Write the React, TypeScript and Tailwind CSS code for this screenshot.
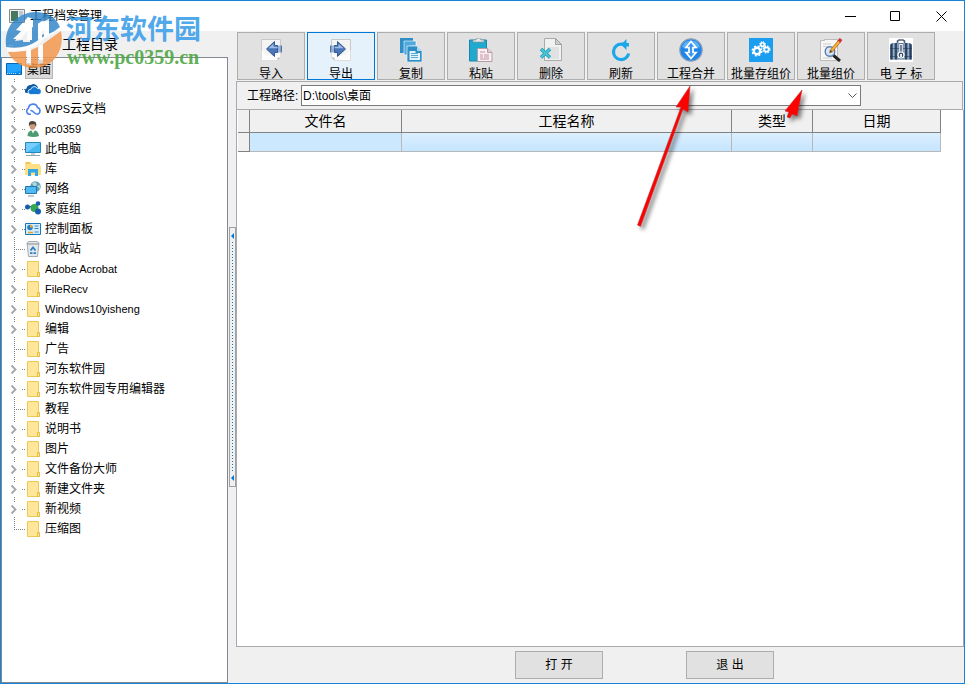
import { useState } from "react"
import type { ReactNode } from "react"

function PageIcon({ flip }: { flip?: boolean }) {
  return (
    <svg width="24" height="24" viewBox="0 0 24 24">
      <g transform={flip ? "translate(24 0) scale(-1 1)" : undefined}>
        <path d="M2.500 1.500h19v18l-3 3h-16z" fill="#f4f4f2" stroke="#c9c9c7" />
        <path d="M2.500 12l5 5 9 1 5-5v6.500l-3 3h-16z" fill="#fff" opacity=".8" />
        <path d="M18.500 22.500v-3h3z" fill="#bcbcba" />
      </g>
      <g transform={flip ? "translate(23 0) scale(-1 1)" : "translate(1 0)"}>
        <path d="M6.500 11l8-7.500v4h3v7h-3v4z" fill="#4a76b8" stroke="#34588f" />
        <path d="M8.500 10.200l5-4.500v3h4v1.500z" fill="#9dbde6" />
        <path d="M18.500 7.500h1v7h-1zM20.500 7.500h1.500v7h-1.500z" fill="#4a76b8" />
      </g>
    </svg>
  )
}

function CopyIcon() {
  return (
    <svg width="24" height="24" viewBox="0 0 24 24">
      <path d="M1 0h13v4H6v11H1z" fill="#2f8ec6" />
      <path d="M5 3h12v5H11v9H5z" fill="#4fa9dc" stroke="#fff" strokeWidth=".6" />
      <path d="M8 8h10l5 5v11H8z" fill="#2f8ec6" stroke="#e5f3fb" strokeWidth=".7" />
      <path d="M18 8v5h5z" fill="#a7d7f2" />
      <path d="M10.500 13h6v2h4.500v7H10.500z" fill="#e4f2fb" />
      <path d="M12 15.500h7M12 17.500h7M12 19.500h7" stroke="#58a9d8" />
    </svg>
  )
}

function PasteIcon() {
  return (
    <svg width="26" height="24" viewBox="0 0 26 24">
      <path d="M1.500 2h17v21h-17z" fill="#20a9cf" stroke="#1487b0" />
      <path d="M5 4V2h3l1-2h3l1 2h3v2z" fill="#e5e8ea" stroke="#879299" strokeWidth=".7" />
      <path d="M9.500 10.500h10l4.500 4v9H9.500z" fill="#f8f0f3" stroke="#b99ba6" />
      <path d="M19.500 10.500v4H24" fill="#e4c6cf" stroke="#b99ba6" />
      <path d="M12 14h5M12 17h3M16 17h5M12 19h3M16 19h5M12 21h9" stroke="#c6929f" />
    </svg>
  )
}

function DeleteIcon() {
  return (
    <svg width="24" height="24" viewBox="0 0 24 24">
      <path d="M5.500.500h11l6 6v16h-17z" fill="#f0f1f1" stroke="#aaa" />
      <path d="M16.500.500v6h6z" fill="#cfcfcf" stroke="#888" strokeWidth=".7" />
      <path d="M8 9h12v12H8z" fill="#dfe1e2" />
      <path d="M2 11l9 8.500M11 11l-9 8.500" stroke="#1c9bb2" strokeWidth="3.400" />
      <path d="M2 11l9 8.500M11 11l-9 8.500" stroke="#4bc5d6" strokeWidth="1.800" />
    </svg>
  )
}

function RefreshIcon() {
  return (
    <svg width="24" height="24" viewBox="0 0 24 24">
      <path d="M14 6.200H12.500a7.700 7.700 0 1 0 7.200 9.300" fill="none" stroke="#1ba7ea" strokeWidth="3.200" />
      <path d="M12 6.500L17.500 1v4h2.500v3.500h-2.500V12z" fill="#1ba7ea" />
    </svg>
  )
}

function MergeIcon() {
  return (
    <svg width="24" height="24" viewBox="0 0 24 24">
      <circle cx="12" cy="12" r="11.200" fill="#1f86e8" stroke="#8fa3b8" strokeWidth="1.200" />
      <path d="M3 9a9.500 9.500 0 0 1 18 0q-9 4-18 0z" fill="#5cb0f7" />
      <path d="M12 3.500l5 6h-3v5h3l-5 6-5-6h3v-5H7z" fill="#3d97ee" stroke="#fff" strokeWidth="1.700" />
    </svg>
  )
}

function GearsIcon() {
  return (
    <svg width="24" height="24" viewBox="0 0 24 24">
      <path d="M0 0h24v24H0z" fill="#1b9df0" />
      <g fill="none" stroke="#fff">
        <circle cx="8" cy="13" r="3.200" strokeWidth="2.400" />
        <circle cx="8" cy="13" r="4.800" strokeWidth="1.400" strokeDasharray="2 1.800" />
        <circle cx="13.500" cy="6.500" r="1.800" strokeWidth="1.600" />
        <circle cx="13.500" cy="6.500" r="2.900" strokeWidth="1" strokeDasharray="1.300 1" />
        <circle cx="17.500" cy="11.500" r="2.200" strokeWidth="1.700" />
        <circle cx="17.500" cy="11.500" r="3.400" strokeWidth="1.100" strokeDasharray="1.600 1.100" />
      </g>
    </svg>
  )
}

function InspectIcon() {
  return (
    <svg width="24" height="24" viewBox="0 0 24 24">
      <path d="M1.500 2.500h4v-1h13v21h-17z" fill="#f7f7f7" stroke="#bbb" />
      <path d="M4 6h8M4 8.500h6M4 20h9" stroke="#ccc" />
      <circle cx="11" cy="13.500" r="4.800" fill="#d5e7fa" stroke="#5b7cab" strokeWidth="1.400" />
      <path d="M14.500 17.500l6.500 5.500" stroke="#222" strokeWidth="3" />
      <path d="M20.500 3l-9 11" stroke="#b36a1d" strokeWidth="3.400" />
      <path d="M20.500 3l-9 11" stroke="#f5b13c" strokeWidth="2" />
      <path d="M22 1l-2 2.600" stroke="#d23030" strokeWidth="3.400" />
      <path d="M11.800 12l-1.800 3.500 3-2z" fill="#333" />
    </svg>
  )
}

function CaseIcon() {
  return (
    <svg width="24" height="24" viewBox="0 0 24 24">
      <path d="M0 0h24v24H0z" fill="#fff" />
      <path d="M8.500 5.500V3l1.500-1h4l1.500 1v2.500" fill="none" stroke="#51647c" strokeWidth="1.600" />
      <path d="M1 7l2-2h18l2 2v14.500H1z" fill="#5a7595" />
      <path d="M2.500 6v15.500M7 5v16.500M17 5v16.500M21.500 6v15.500" stroke="#263f60" strokeWidth="1.600" />
      <path d="M4.700 5v16.500M9 5v16.500M15 5v16.500M19.300 5v16.500" stroke="#9fb4ca" strokeWidth="1.200" />
      <path d="M1 10.500h22M1 18.500h22" stroke="#20354f" opacity=".5" />
      <path d="M12 6v8" stroke="#eef3f8" strokeWidth="3.600" />
      <path d="M12 7v8" stroke="#41566f" strokeWidth="1.400" />
      <circle cx="12" cy="17" r="3" fill="#3c5068" stroke="#fff" strokeWidth="1.200" />
      <path d="M11 16h2v3h-2z" fill="#dce6ef" />
    </svg>
  )
}

const tools: { label: string; icon: ReactNode }[] = [
  { label: "导入", icon: <PageIcon /> },
  { label: "导出", icon: <PageIcon flip /> },
  { label: "复制", icon: <CopyIcon /> },
  { label: "粘贴", icon: <PasteIcon /> },
  { label: "删除", icon: <DeleteIcon /> },
  { label: "刷新", icon: <RefreshIcon /> },
  { label: "工程合并", icon: <MergeIcon /> },
  { label: "批量存组价", icon: <GearsIcon /> },
  { label: "批量组价", icon: <InspectIcon /> },
  { label: "电 子 标", icon: <CaseIcon /> },
]

function FolderIcon() {
  return (
    <svg width="16" height="16" viewBox="0 0 16 16">
      <path d="M2.500.500h11v15h-11z" fill="#ffe699" stroke="#edc956" />
      <path d="M12.500 11.500h2v4h-2z" fill="#ffe699" stroke="#e3bb3f" />
    </svg>
  )
}

function MonitorIcon() {
  return (
    <svg width="18" height="16" viewBox="0 0 18 16">
      <path d="M1.500 2.500h15v11h-15z" fill="#0a8df0" stroke="#0567b4" />
      <path d="M2 3h14v7L2 12.500z" fill="#22a3ff" />
      <path d="M2 12.500h10M14 12.500h2" stroke="#b9e0fb" strokeDasharray="1 1" />
    </svg>
  )
}

const icons: Record<string, ReactNode> = {
  onedrive: (
    <svg width="16" height="16" viewBox="0 0 16 16">
      <path d="M1 12a2.500 2.500 0 0 1 .5-4.500A4 4 0 0 1 6 4a4.500 4.500 0 0 1 7 2.500l-5 5.500z" fill="#0c59a4" />
      <path d="M5.500 13.500a2.600 2.600 0 0 1 .3-5.200 3.600 3.600 0 0 1 6.700-.8 3 3 0 0 1 1.500 6z" fill="#1478d4" stroke="#fff" strokeWidth=".8" />
    </svg>
  ),
  wps: (
    <svg width="16" height="16" viewBox="0 0 16 16">
      <path d="M6 13.200H4a3.200 3.200 0 0 1-.5-6A4.600 4.600 0 0 1 12.500 6.500a3.500 3.500 0 0 1 0 6.700q-2 0-4-2.200T5.500 10" fill="none" stroke="#4b83ea" strokeWidth="1.600" />
    </svg>
  ),
  user: (
    <svg width="16" height="16" viewBox="0 0 16 16">
      <path d="M2.500 15q0-5 5-6 6 0 6.500 6-5 2-11.500 0z" fill="#4c9b72" />
      <path d="M6 8.500l2 4 2-3.500z" fill="#f4f4f4" />
      <ellipse cx="7.500" cy="4.800" rx="3" ry="4" fill="#c99a75" />
      <path d="M4 5Q3 0 7.500 0q5 0 3.500 6l-1.500-3-4 .5z" fill="#4d443d" />
    </svg>
  ),
  pc: (
    <svg width="16" height="16" viewBox="0 0 16 16">
      <path d="M.500 1.500h15v10H.500z" fill="#48b8f1" stroke="#2584b8" />
      <path d="M1 2h14L2 11H1z" fill="#75ceff" />
      <path d="M6 12h4v2H6z" fill="#c3d1da" />
      <path d="M1 14.500h14" stroke="#8ea3b1" />
    </svg>
  ),
  library: (
    <svg width="16" height="16" viewBox="0 0 16 16">
      <path d="M0 1h6l1 2h8v2h1v9H0z" fill="#ffdf83" />
      <path d="M1 2h4" stroke="#e2ae37" />
      <path d="M3 15V8h10v7h-3v-3.500H6V15z" fill="#32a9e5" />
    </svg>
  ),
  network: (
    <svg width="16" height="16" viewBox="0 0 16 16">
      <circle cx="10.500" cy="5.500" r="5.200" fill="#5b9fbe" />
      <path d="M7 2l4-1 1 3-3 2zM12 5l3-1v4z" fill="#b5d7d8" />
      <path d="M.500 5.500h11v7H.500z" fill="#4dbaf4" stroke="#2378ab" />
      <path d="M3 15h6" stroke="#7799ad" />
    </svg>
  ),
  home: (
    <svg width="16" height="16" viewBox="0 0 16 16">
      <path d="M3 6l7 1 3-4M10 7l3 4" stroke="#9fb8c8" />
      <circle cx="2.500" cy="6" r="2.500" fill="#175fae" />
      <circle cx="9.500" cy="7" r="4" fill="#32a852" />
      <circle cx="13" cy="2.500" r="2.300" fill="#175fae" />
      <circle cx="13" cy="10.500" r="3" fill="#175fae" />
    </svg>
  ),
  control: (
    <svg width="16" height="16" viewBox="0 0 16 16">
      <path d="M.500 2.500h15v11H.500z" fill="#d3edfc" stroke="#1877b6" />
      <circle cx="5" cy="6.500" r="2.800" fill="#2680c8" />
      <path d="M5 6.500V3.700a2.800 2.800 0 0 1 2.800 2.800z" fill="#f0a825" />
      <path d="M9.500 5h4M9.500 7.500h4M9.500 11h4" stroke="#3a8bc4" />
      <path d="M3 11.500h5" stroke="#e3a42d" strokeWidth="1.500" />
    </svg>
  ),
  recycle: (
    <svg width="16" height="16" viewBox="0 0 16 16">
      <path d="M2 2l2-1.500h8L14 2l-1.500 13.500h-9z" fill="#e5e8ea" stroke="#a5abb0" />
      <path d="M2 3h12" stroke="#888f94" />
      <path d="M5.500 9.500l2.500-3 2.500 3M5 12.200h2.500M8.500 12.200H11" fill="none" stroke="#2482c5" strokeWidth="1.800" />
    </svg>
  ),
  folder: <FolderIcon />,
}

// latin is set a size smaller than the Chinese part of a name
const nodes = [
  { latin: "OneDrive", icon: "onedrive" },
  { latin: "WPS", label: "云文档", icon: "wps" },
  { latin: "pc0359", icon: "user" },
  { label: "此电脑", icon: "pc" },
  { label: "库", icon: "library" },
  { label: "网络", icon: "network" },
  { label: "家庭组", icon: "home" },
  { label: "控制面板", icon: "control" },
  { label: "回收站", icon: "recycle", leaf: true },
  { latin: "Adobe Acrobat", icon: "folder" },
  { latin: "FileRecv", icon: "folder" },
  { latin: "Windows10yisheng", icon: "folder" },
  { label: "编辑", icon: "folder" },
  { label: "广告", icon: "folder", leaf: true },
  { label: "河东软件园", icon: "folder" },
  { label: "河东软件园专用编辑器", icon: "folder" },
  { label: "教程", icon: "folder", leaf: true },
  { label: "说明书", icon: "folder" },
  { label: "图片", icon: "folder" },
  { label: "文件备份大师", icon: "folder" },
  { label: "新建文件夹", icon: "folder" },
  { label: "新视频", icon: "folder" },
  { label: "压缩图", icon: "folder", leaf: true },
]

function Guide({ leaf, last }: { leaf?: boolean; last?: boolean }) {
  return (
    <svg width="23" height="20" viewBox="0 0 23 20" className="shrink-0" fill="none">
      {leaf ? (
        <path d={last ? "M12.500 0v10M12 10.500h11" : "M12.500 0v20M12 10.500h11"} stroke="#808080" strokeDasharray="1 1" />
      ) : (
        <>
          <path d="M12.500 0v3M12.500 18v2M20 10.500h3" stroke="#808080" strokeDasharray="1 1" />
          <path d="M9.500 6.500l4 4-4 4" stroke="#a6a6a6" strokeWidth="1.800" />
        </>
      )}
    </svg>
  )
}

function TitleBar() {
  return (
    <header className="flex h-[30px] items-center bg-white pl-2">
      <svg width="16" height="14" viewBox="0 0 16 14">
        <path d="M.500.500h15v13H.500z" fill="#eee" stroke="#8a8a8a" />
        <path d="M2 2h7v10H2z" fill="#46785f" />
        <path d="M10 2h4v5h-4z" fill="#b9c7d8" />
      </svg>
      <h1 className="ml-[5px] flex-1 text-xs">工程档案管理</h1>
      <button aria-label="最小化" className="flex h-full w-[46px] items-center justify-center">
        <svg width="11" height="11" stroke="#000"><path d="M0 5.500h11" /></svg>
      </button>
      <button aria-label="最大化" className="flex h-full w-[45px] items-center justify-center">
        <svg width="11" height="11" stroke="#000" fill="none"><path d="M.500.500h9v9h-9z" /></svg>
      </button>
      <button aria-label="关闭" className="flex h-full w-[46px] items-center justify-center">
        <svg width="11" height="11" stroke="#000"><path d="M.500.500l10 10M10.500.500l-10 10" /></svg>
      </button>
    </header>
  )
}

function Watermark() {
  return (
    <div className="pointer-events-none absolute top-[9px] left-1 flex gap-1">
      <svg width="57" height="60" viewBox="0 0 57 60" opacity=".82">
        <path d="M1 36C-1 17 11 3 30 2c12 0 21 5 25 15L44 25V13l-7-2-9 6V9l-5-2-12 13 5 1-6 10 8-1v4Q9 36 1 36z" fill="#2f84c8" />
        <path d="M1 36q9 0 16-4h8V19l8-6v13l10-3v4Q22 42 2 40z" fill="#2f84c8" />
        <path d="M56 21c4 20-8 37-27 37C17 58 7 51 3 42l18-1v13l5 1V40l7-3v17l5-1V34z" fill="#f3954a" />
        <path d="M8 29L27 11v19h-5V21l-6 8zM33 30V14l11-5v18l-5 2V18l-2 1v10z" fill="#fff" />
        <path d="M1 37q18 3 31-6 12-9 23-11-11 5-20 13Q20 44 2 41z" fill="#fff" />
        <path d="M22 39h4v14h-4zM34 35h4v15h-4z" fill="#fff" />
      </svg>
      <div className="pt-[3px]">
        <div className="font-['Noto_Sans_CJK_SC',sans-serif] text-[27px] leading-[30px] font-bold text-[#3a9de8]/90">河东软件园</div>
        <div className="pl-px font-['Liberation_Serif',serif] text-[20px] leading-[28px] font-bold text-[#4aa540]/90">www.pc0359.cn</div>
      </div>
    </div>
  )
}

function Arrows() {
  return (
    <svg className="pointer-events-none absolute top-[79px] left-[629px] drop-shadow-[3px_3px_2px_rgba(0,0,0,0.5)]" width="180" height="155" viewBox="630 80 180 155">
      <path d="M690 86l-14 21 5 0-43.500 118 3 1.500L683 109l5 3z" fill="#f00" stroke="#b33" strokeWidth=".6" />
      <path d="M802 90l-17 21 4 1-2 5 3 1 2-4 5 2z" fill="#f00" stroke="#b33" strokeWidth=".6" />
    </svg>
  )
}

export default function App() {
  const [active, setActive] = useState("导出")

  return (
    <div className="relative flex min-h-screen flex-col border border-[#1883d7] bg-[#f0f0f0] font-['Liberation_Sans','Noto_Sans_CJK_SC',sans-serif] text-xs text-black">
      <TitleBar />

      <div className="flex flex-1">
        {/* Project tree */}
        <aside className="flex w-[227px] shrink-0 flex-col">
          <h2 className="h-[26px] pl-[61px] text-sm leading-[26px]">工程目录</h2>
          <div className="flex-1 border border-[#828790] bg-white">
            <div className="flex h-[21px] items-center gap-0.5 pt-px pl-[3px]">
              <MonitorIcon />
              <span className="h-5 border border-[#b5b5b5] bg-[#d9d9d9] px-px leading-[20px]">桌面</span>
            </div>
            <ul>
              {nodes.map((node, i) => (
                <li key={i} className="flex h-5 items-center">
                  <Guide leaf={node.leaf} last={i === nodes.length - 1} />
                  {icons[node.icon]}
                  <span className="ml-1 leading-5 whitespace-nowrap">
                    {node.latin && <span className="text-[11px]">{node.latin}</span>}
                    {node.label}
                  </span>
                </li>
              ))}
            </ul>
          </div>
        </aside>

        {/* Splitter */}
        <div className="flex w-2 shrink-0 flex-col pt-[196px] pl-px">
          <div className="flex h-[260px] flex-col items-center justify-between border border-[#a0a0a0] py-[5px]">
            <svg width="3" height="6"><path d="M3 0v6L0 3z" fill="#0078d7" /></svg>
            <svg width="1" height="230"><path d="M.500 0v230" stroke="#0078d7" strokeDasharray="1 2" /></svg>
            <svg width="3" height="6"><path d="M3 0v6L0 3z" fill="#0078d7" /></svg>
          </div>
        </div>

        <main className="flex min-w-0 flex-1 flex-col">
          {/* Toolbar */}
          <div className="flex h-[50px] gap-0.5 pt-px pl-px">
            {tools.map((tool) => (
              <button
                key={tool.label}
                onClick={() => setActive(tool.label)}
                className={`flex h-[48px] w-[68px] flex-col items-center border pt-[5px] whitespace-nowrap ${active === tool.label ? "border-[#0078d7] bg-[#e5f1fb]" : "border-[#adadad] bg-[#e1e1e1]"
                  }`}
              >
                <span className="shrink-0">{tool.icon}</span>
                <span className="h-[18px] leading-6">{tool.label}</span>
              </button>
            ))}
          </div>

          {/* Path */}
          <div className="mr-px flex h-[29px] items-center border border-[#a9a9ad] pl-[10px]">
            <label htmlFor="path" className="w-[54px] whitespace-nowrap">工程路径:</label>
            <div className="relative mr-[101px] flex-1">
              <select id="path" className="block h-[21px] w-full appearance-none border border-[#7a7a7a] bg-white pt-0.5 pl-px leading-[17px]">
                <option>D:\tools\桌面</option>
              </select>
              <svg className="pointer-events-none absolute top-2 right-1" width="9" height="6" fill="none" stroke="#555"><path d="M.500.500l4 4 4-4" /></svg>
            </div>
          </div>

          {/* File list */}
          <div className="flex-1 border border-t-0 border-[#a9a9ad] bg-white">
            <div className="bg-white pr-[22px] pl-px">
              <table className="w-full table-fixed border-separate border-spacing-0">
                <colgroup>
                  <col className="w-[12px]" />
                  <col className="w-[152px]" />
                  <col />
                  <col className="w-[81px]" />
                  <col className="w-[128px]" />
                </colgroup>
                <thead>
                  <tr className="h-[23px] bg-[#f0f0f0] text-sm leading-[22px]">
                    <td className="border-r border-b border-[#828282] p-0" />
                    {["文件名", "工程名称", "类型", "日期"].map((name) => (
                      <th key={name} className="border-r border-b border-[#828282] p-0 font-normal">{name}</th>
                    ))}
                  </tr>
                </thead>
                <tbody>
                  <tr className="h-[19px]">
                    <td className="border-r border-b border-[#828282] bg-[#f0f0f0] p-0" />
                    <td className="border-r border-b border-[#b8b8b8] bg-[#cce8ff] p-0" />
                    <td className="border-r border-b border-[#b8b8b8] bg-linear-to-b from-[#dceffe] to-[#c5e5ff] p-0" />
                    <td className="border-r border-b border-[#b8b8b8] bg-linear-to-b from-[#dceffe] to-[#c5e5ff] p-0" />
                    <td className="border-r border-b border-[#b8b8b8] bg-linear-to-b from-[#dceffe] to-[#c5e5ff] p-0" />
                  </tr>
                </tbody>
              </table>
            </div>
          </div>

          <footer className="flex h-9 gap-[83px] pt-1 pl-[279px]">
            <button className="h-7 w-[88px] border border-[#adadad] bg-[#e1e1e1]">打 开</button>
            <button className="h-7 w-[88px] border border-[#adadad] bg-[#e1e1e1]">退 出</button>
          </footer>
        </main>
      </div>

      <Watermark />
      <Arrows />
    </div>
  )
}
